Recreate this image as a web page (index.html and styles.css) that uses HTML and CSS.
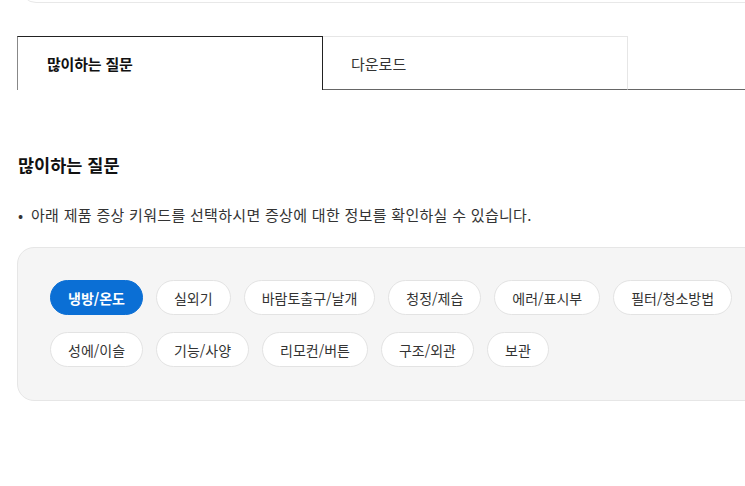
FILE: index.html
```html
<!DOCTYPE html>
<html lang="ko">
<head>
<meta charset="utf-8">
<link rel="stylesheet" href="styles.css">
</head>
<body>
<div class="page">
  <div class="top-card"></div>
  <div class="tabs">
    <div class="tab tab-active">많이하는 질문</div>
    <div class="tab tab-normal">다운로드</div>
    <div class="tab-fill"></div>
  </div>
  <h2 class="title">많이하는 질문</h2>
  <p class="note"><span class="dot">•</span>아래 제품 증상 키워드를 선택하시면 증상에 대한 정보를 확인하실 수 있습니다.</p>
  <div class="keyword-box">
    <div class="chips">
      <span class="chip chip-on">냉방/온도</span>
      <span class="chip">실외기</span>
      <span class="chip">바람토출구/날개</span>
      <span class="chip">청정/제습</span>
      <span class="chip">에러/표시부</span>
      <span class="chip">필터/청소방법</span>
      <span class="chip">성에/이슬</span>
      <span class="chip">기능/사양</span>
      <span class="chip">리모컨/버튼</span>
      <span class="chip">구조/외관</span>
      <span class="chip">보관</span>
    </div>
  </div>
</div>
</body>
</html>
```

FILE: styles.css
```css
html, body {
  margin: 0;
  padding: 0;
  background: #fff;
  overflow: hidden;
}
body {
  font-family: "Noto Sans CJK KR", "Noto Sans", sans-serif;
  color: #222;
}
.page {
  padding-left: 17px;
  width: 900px;
}
.top-card {
  margin-top: -40px;
  margin-left: 3px;
  height: 41px;
  border: 1px solid #e8e8e8;
  border-radius: 16px;
}
.tabs {
  display: flex;
  margin-top: 33px;
  height: 54px;
}
.tab {
  box-sizing: border-box;
  height: 54px;
  display: flex;
  align-items: center;
  padding-left: 29px;
  font-size: 15px;
}
.tab-active {
  width: 306px;
  border-top: 1px solid #222;
  border-left: 1px solid #888;
  border-right: 1px solid #222;
  font-weight: 700;
  color: #111;
  letter-spacing: -0.2px;
}
.tab-normal {
  width: 305px;
  border-top: 1px solid #e6e6e6;
  border-right: 1px solid #e6e6e6;
  border-bottom: 1px solid #666;
  padding-left: 28px;
  color: #333;
}
.tab-fill {
  flex: 1;
  border-bottom: 1px solid #666;
}
.title {
  margin: 63px 0 0 1px;
  font-size: 17.5px;
  line-height: 24px;
  font-weight: 700;
  color: #111;
}
.note {
  margin: 28px 0 0 0;
  font-size: 15px;
  line-height: 20px;
  color: #333;
  display: flex;
  letter-spacing: 0.3px;
}
.dot {
  width: 13px;
  padding-left: 1px;
  letter-spacing: 0;
}
.keyword-box {
  margin-top: 22px;
  box-sizing: border-box;
  height: 154px;
  border: 1px solid #e6e6e6;
  border-radius: 17px;
  background: #f5f5f5;
  padding: 32px 32px;
}
.chips {
  display: flex;
  flex-wrap: wrap;
  column-gap: 13px;
  row-gap: 17px;
  width: 700px;
}
.chip {
  flex-shrink: 0;
  box-sizing: border-box;
  height: 35px;
  display: inline-flex;
  align-items: center;
  padding: 0 17px;
  border: 1px solid #e3e3e3;
  border-radius: 18px;
  background: #fff;
  font-size: 14px;
  color: #333;
}
.chip-on {
  background: #0b6fd5;
  border-color: #0b6fd5;
  color: #fff;
  font-weight: 700;
}
```
